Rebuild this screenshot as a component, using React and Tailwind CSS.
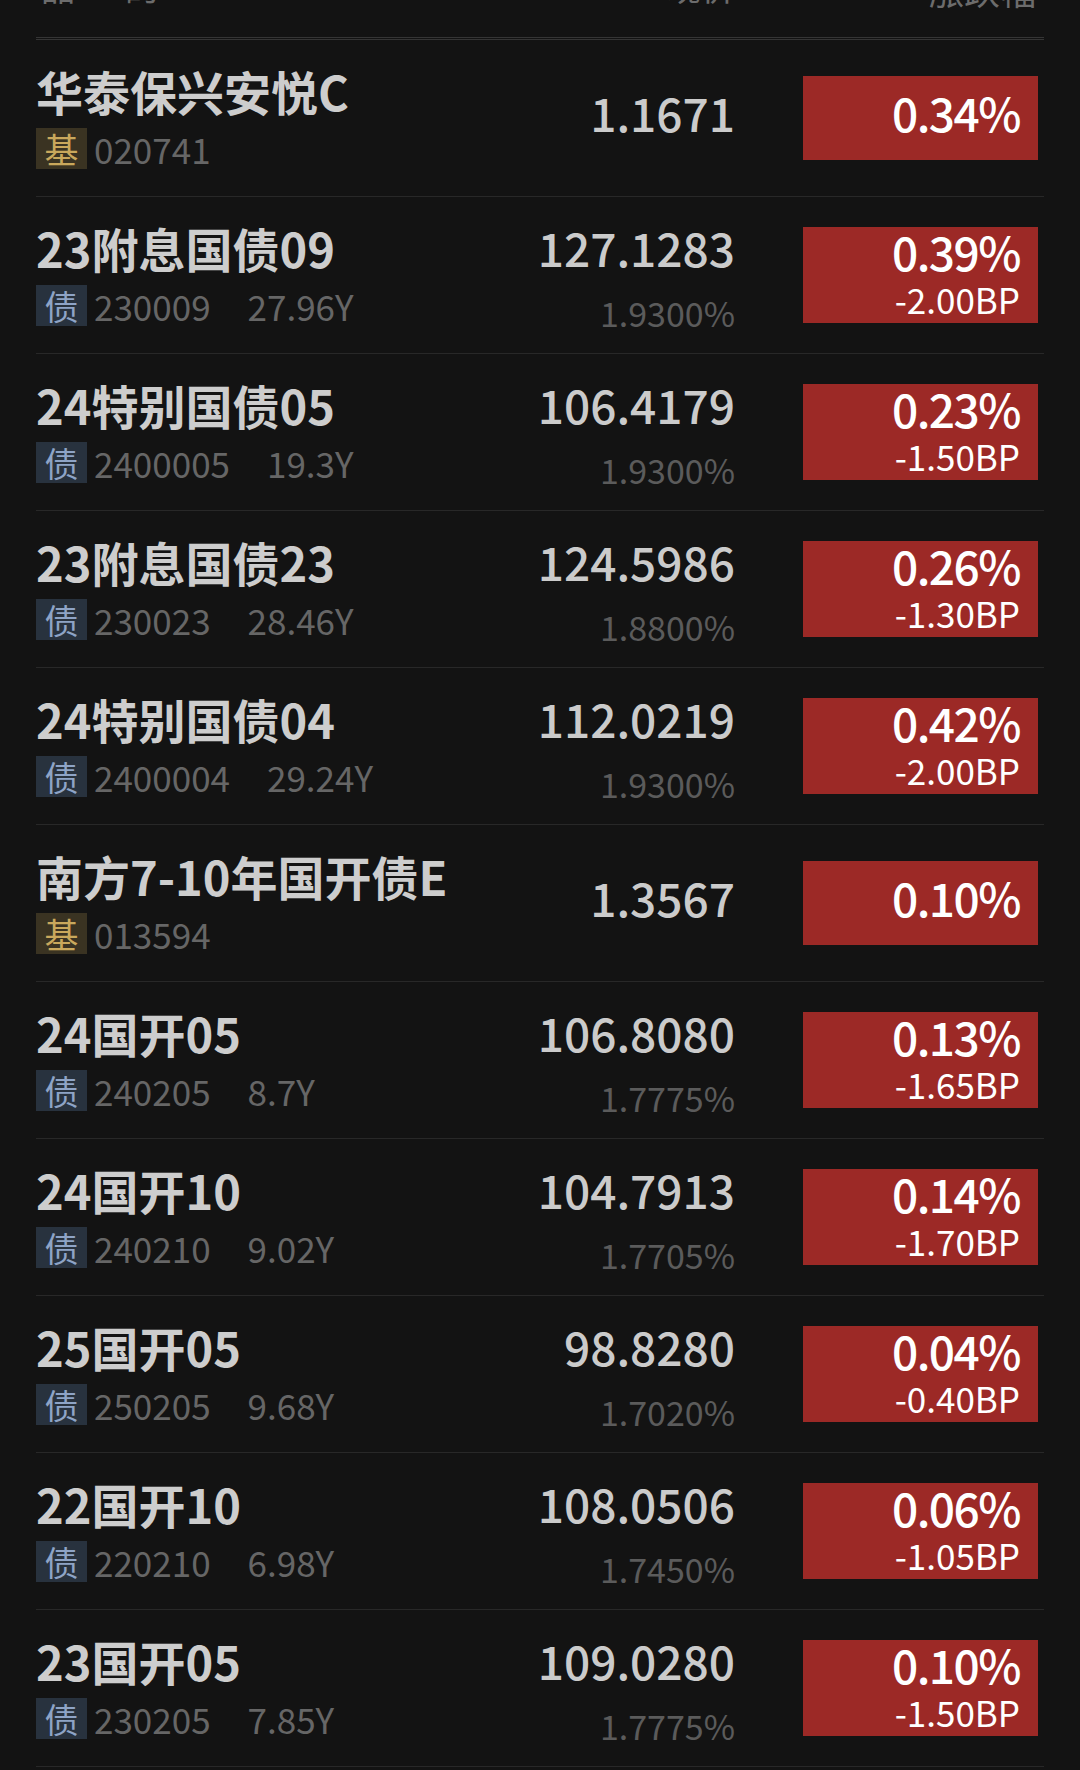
import React from 'react';

const rows = [
  { name: '华泰保兴安悦C', type: 'fund', code: '020741', price: '1.1671', change: '0.34%' },
  { name: '23附息国债09', type: 'bond', code: '230009', term: '27.96Y', price: '127.1283', yld: '1.9300%', change: '0.39%', bp: '-2.00BP' },
  { name: '24特别国债05', type: 'bond', code: '2400005', term: '19.3Y', price: '106.4179', yld: '1.9300%', change: '0.23%', bp: '-1.50BP' },
  { name: '23附息国债23', type: 'bond', code: '230023', term: '28.46Y', price: '124.5986', yld: '1.8800%', change: '0.26%', bp: '-1.30BP' },
  { name: '24特别国债04', type: 'bond', code: '2400004', term: '29.24Y', price: '112.0219', yld: '1.9300%', change: '0.42%', bp: '-2.00BP' },
  { name: '南方7-10年国开债E', type: 'fund', code: '013594', price: '1.3567', change: '0.10%' },
  { name: '24国开05', type: 'bond', code: '240205', term: '8.7Y', price: '106.8080', yld: '1.7775%', change: '0.13%', bp: '-1.65BP' },
  { name: '24国开10', type: 'bond', code: '240210', term: '9.02Y', price: '104.7913', yld: '1.7705%', change: '0.14%', bp: '-1.70BP' },
  { name: '25国开05', type: 'bond', code: '250205', term: '9.68Y', price: '98.8280', yld: '1.7020%', change: '0.04%', bp: '-0.40BP' },
  { name: '22国开10', type: 'bond', code: '220210', term: '6.98Y', price: '108.0506', yld: '1.7450%', change: '0.06%', bp: '-1.05BP' },
  { name: '23国开05', type: 'bond', code: '230205', term: '7.85Y', price: '109.0280', yld: '1.7775%', change: '0.10%', bp: '-1.50BP' },
];

const Badge = ({ type }) =>
  type === 'fund' ? (
    <span className="flex h-[41px] w-[51px] items-center justify-center bg-[#3a3322] text-[34px] leading-none text-[#c9a85c]">基</span>
  ) : (
    <span className="flex h-[41px] w-[51px] items-center justify-center bg-[#28323e] text-[34px] leading-none text-[#8ea4c6]">债</span>
  );

const Row = ({ item }) => {
  const isBond = item.type === 'bond';
  return (
    <div className="flex h-[157px] border-b border-[#282828]">
      <div className="flex-1 pt-[23px]">
        <div className="text-[47px] font-semibold leading-[56px] text-[#cdcdcd] whitespace-nowrap">{item.name}</div>
        <div className="mt-[9px] flex items-center">
          <Badge type={item.type} />
          <span className="ml-[7px] text-[35px] leading-[40px] text-[#666666]">{item.code}</span>
          {isBond && <span className="ml-[37px] text-[35px] leading-[40px] text-[#666666]">{item.term}</span>}
        </div>
      </div>

      {isBond ? (
        <div className="pt-[24px] text-right">
          <div className="text-[46px] font-medium leading-[52px] text-[#cbcbcb]">{item.price}</div>
          <div className="mt-[20px] text-[34px] leading-[40px] text-[#5b5b5b]">{item.yld}</div>
        </div>
      ) : (
        <div className="pt-[46px] text-right">
          <div className="text-[46px] font-medium leading-[52px] text-[#cbcbcb]">{item.price}</div>
        </div>
      )}

      {isBond ? (
        <div className="ml-[68px] mr-[6px] mt-[30px] flex h-[96px] w-[235px] flex-col items-end bg-[#9c2926] pr-[18px] text-white">
          <div className="text-[46px] font-medium leading-[48px] tracking-[-1.5px]">{item.change}</div>
          <div className="mt-[4px] text-[35px] leading-[40px]">{item.bp}</div>
        </div>
      ) : (
        <div className="ml-[68px] mr-[6px] mt-[36px] flex h-[84px] w-[235px] flex-col items-end bg-[#9c2926] pr-[18px] pt-[12px] text-white">
          <div className="text-[46px] font-medium leading-[48px] tracking-[-1.5px]">{item.change}</div>
        </div>
      )}
    </div>
  );
};

export default function App() {
  return (
    <div className="min-h-[1770px] w-[1080px] overflow-hidden bg-[#131313]" style={{ fontFamily: '"Noto Sans CJK SC", "Noto Sans", sans-serif' }}>
      <div className="mx-[36px]">
        <div className="h-[37px] overflow-hidden">
          <div className="-mt-[30px] flex text-[34px] leading-[34px] text-[#6c6c6c]">
            <span className="ml-[5px]">品</span>
            <span className="ml-[50px]">的</span>
            <span className="ml-auto mr-[309px]">现价</span>
          </div>
          <div className="-mt-[34px] flex justify-end pr-[8px] text-[36px] leading-[34px] text-[#6c6c6c]">
            <span className="mt-[2px]">涨跌幅</span>
          </div>
        </div>
        <div className="h-px bg-[#353535]" />
        <div className="h-px" />
        <div className="h-px bg-[#353535]" />
        {rows.map((item, i) => (
          <Row key={i} item={item} />
        ))}
      </div>
    </div>
  );
}
